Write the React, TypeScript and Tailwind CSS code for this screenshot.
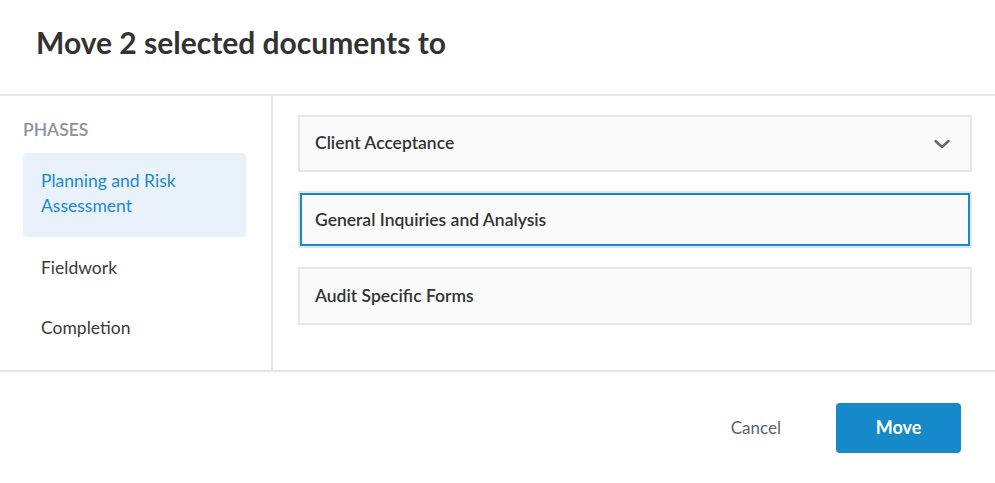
import React from "react";

function Chevron() {
  return (
    <svg width="16" height="16" viewBox="0 0 16 16" fill="none">
      <path d="M1.5 5 L8 11 L14.5 5" stroke="#666" strokeWidth="2.4" strokeLinecap="round" strokeLinejoin="round" />
    </svg>
  );
}

export default function App() {
  const phases = ["Planning and Risk Assessment", "Fieldwork", "Completion"];
  return (
    <div className="w-[995px] h-[483px] bg-white flex flex-col text-[#333]" style={{ fontFamily: "Lato, 'Open Sans', sans-serif" }}>
      <div className="h-[94px] flex items-center px-[36px] shrink-0">
        <h1 className="text-[30px] font-bold text-[#333] leading-none -mt-[10px]">Move 2 selected documents to</h1>
      </div>
      <div className="h-[278px] border-y-2 border-[#e6e6e6] flex shrink-0">
        <div className="w-[273px] border-r-2 border-[#e6e6e6] pl-[23px] pr-[25px] pt-[21px] shrink-0">
          <div className="text-[17.5px] font-semibold text-[#8c939a] leading-[25px] uppercase mb-[11px]">Phases</div>
          <div className="flex flex-col">
            {phases.map((p, i) => (
              <div
                key={p}
                className={
                  i === 0
                    ? "rounded-[4px] bg-[#e9f2fa] text-[#1a8ad0] px-[18px] pt-[15px] pb-[19px] text-[17.5px] leading-[25px] pr-[40px]"
                    : "px-[18px] pt-[18px] pb-[17px] text-[17.5px] leading-[25px] text-[#3a3a3a]"
                }
              >
                {p}
              </div>
            ))}
          </div>
        </div>
        <div className="flex-1 pl-[25px] pr-[23px] pt-[19px] flex flex-col gap-[19px]">
          <div className="h-[57px] border-2 border-[#e6e6e6] bg-[#fafafa] flex items-center justify-between pl-[15px] pr-[20px]">
            <span className="text-[17.5px] font-semibold text-[#333]">Client Acceptance</span>
            <Chevron />
          </div>
          <div className="h-[57px] border-2 border-[#e6e6e6] bg-[#fafafa] flex items-center pl-[15px] shadow-[inset_0_0_0_2px_#1589c9]">
            <span className="text-[17.5px] font-semibold text-[#333] mt-[1px]">General Inquiries and Analysis</span>
          </div>
          <div className="h-[58px] border-2 border-[#e6e6e6] bg-[#fafafa] flex items-center pl-[15px]">
            <span className="text-[17.5px] font-semibold text-[#333] mt-[1px]">Audit Specific Forms</span>
          </div>
        </div>
      </div>
      <div className="flex-1 flex items-center justify-end pr-[34px] gap-[55px]">
        <button className="text-[17px] text-[#5b6470]">Cancel</button>
        <button className="w-[125px] h-[50px] rounded-[4px] bg-[#1589c9] text-white text-[18px] font-bold">Move</button>
      </div>
    </div>
  );
}
